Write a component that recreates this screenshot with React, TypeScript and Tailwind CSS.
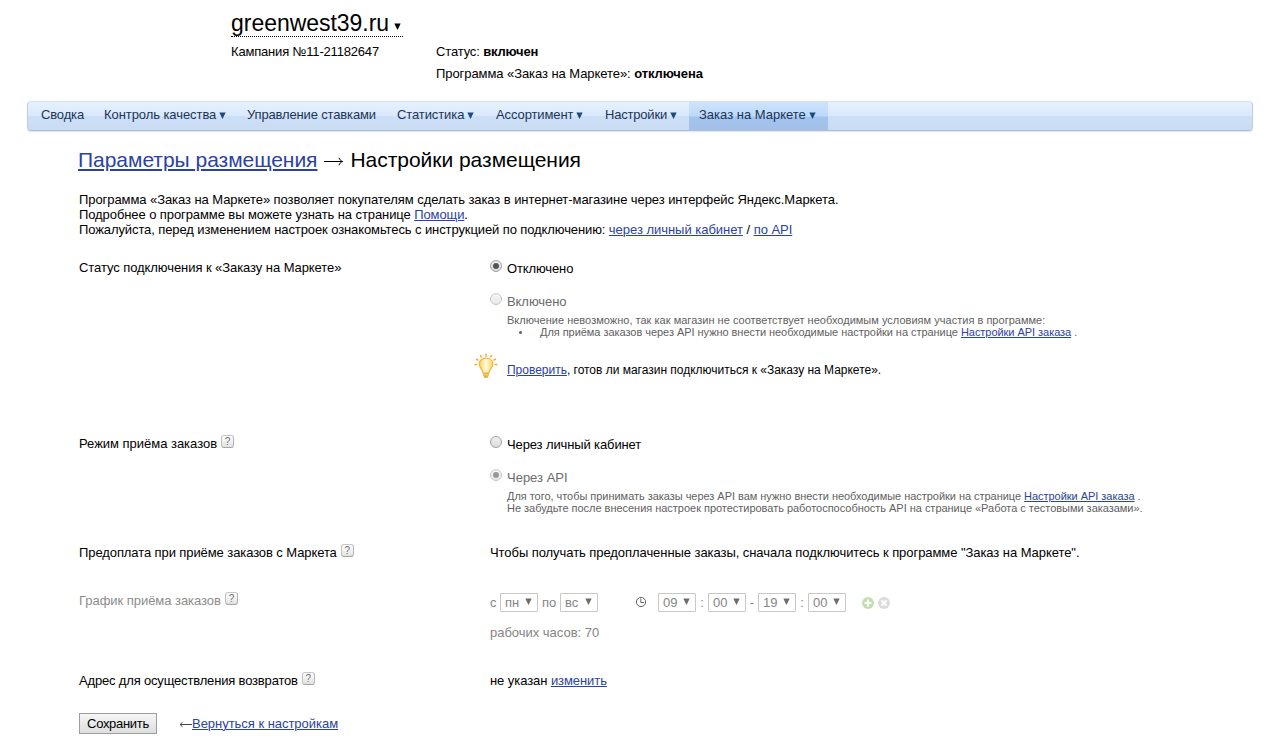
import React from 'react';

type LinkProps = { children: React.ReactNode; className?: string };

function Link({ children, className = 'underline-offset-1 decoration-1' }: LinkProps) {
  return (
    <a href="#" className={`text-[#2a42a4] underline ${className}`}>
      {children}
    </a>
  );
}

function Caret({ className = 'text-[#1d4b7e]' }: { className?: string }) {
  return (
    <svg width="7" height="7" viewBox="0 0 7 7" className={`shrink-0 ${className}`} fill="currentColor">
      <path d="M0.3 0.5h6.4L3.5 7z" />
    </svg>
  );
}

function Help() {
  return (
    <span className="-mt-px flex h-[13px] w-[13px] shrink-0 items-center justify-center rounded-[3px] border border-t-[#c6c6c6] border-r-[#b4b4b4] border-b-[#a4a4a4] border-l-[#c0c0c0] bg-linear-to-b from-white to-[#e2e2e2] text-[10px] leading-[11px] tracking-normal text-[#707070]">
      ?
    </span>
  );
}

function Radio({ checked = false, disabled = false }: { checked?: boolean; disabled?: boolean }) {
  return (
    <span
      className={`flex h-3 w-3 shrink-0 items-center justify-center rounded-full border border-[#a2a2a2] bg-linear-to-b from-[#efefef] to-[#dcdcdc] ${disabled ? 'opacity-60' : ''}`}
    >
      {checked && <span className="h-1.5 w-1.5 rounded-full bg-[#555]" />}
    </span>
  );
}

function Bulb() {
  return (
    <svg width="24" height="26" viewBox="0 0 24 26" fill="none">
      <defs>
        <linearGradient id="glass" x1="0" y1="0" x2="1" y2="0">
          <stop offset="0" stopColor="#fbcf55" />
          <stop offset=".5" stopColor="#fffbe2" />
          <stop offset="1" stopColor="#fdd45e" />
        </linearGradient>
      </defs>
      <g stroke="#f3ac35" strokeWidth="1.6">
        <path d="M12 .8v3M6.4 2.100l1.200 2.400M17.600 2.100l-1.200 2.400M2.200 6l2.400 1.400M21.800 6l-2.400 1.400M.5 11.500h2.800M20.700 11.500h2.800" />
      </g>
      <path
        d="M12 5.200c-4.200 0-6.800 2.700-6.800 6.100 0 3.600 3.600 5 4.100 9.200h5.400c.5-4.200 4.100-5.600 4.100-9.200 0-3.400-2.600-6.100-6.800-6.100z"
        fill="url(#glass)"
        stroke="#f5b53c"
        strokeWidth="1.2"
      />
      <path d="M9.200 19.500h5.600v3L13.400 25h-2.800l-1.400-2.500z" fill="#f3ae3c" />
      <path d="M9.400 21.800h5.200" stroke="#fbd98c" strokeWidth=".8" />
    </svg>
  );
}

function Select({ value }: { value: string }) {
  return (
    <span className="flex h-[19px] w-[38px] shrink-0 items-center justify-between rounded-[1px] border border-[#c8c8c8] bg-white pr-[5px] pl-1">
      <span className="leading-[15px]">{value}</span>
      <Caret className="mb-0.5 text-[#6d6d6d]" />
    </span>
  );
}

type NavItem = { label: string; width: string; menu?: boolean; active?: boolean };

const nav: NavItem[] = [
  { label: 'Сводка', width: 'w-[63px] tracking-[-0.15px]' },
  { label: 'Контроль качества', width: 'w-[143px] tracking-[-0.07px]', menu: true },
  { label: 'Управление ставками', width: 'w-[150px] tracking-[-0.15px]' },
  { label: 'Статистика', width: 'w-[99px] tracking-[-0.1px]', menu: true },
  { label: 'Ассортимент', width: 'w-[109px] tracking-[-0.1px]', menu: true },
  { label: 'Настройки', width: 'w-[94px] tracking-[-0.2px]', menu: true },
  { label: 'Заказ на Маркете', width: 'w-[139px] tracking-normal', menu: true, active: true },
];

function NavBar() {
  return (
    <nav className="mr-[18px] ml-[27px] flex h-[30px] rounded-[4px] border border-t-[#d3e0ef] border-r-[#bccde6] border-b-[#aabfdc] border-l-[#bccde6] bg-[linear-gradient(to_bottom,#e7f1fe_0%,#dae9fd_48%,#cbdff8_52%,#cbdcf1_100%)] pl-[3px] text-[#1c3555] shadow-[0_1px_1px_#dbe4f0]">
      {nav.map((item) => (
        <a
          key={item.label}
          href="#"
          className={`flex h-[28px] shrink-0 gap-[3px] pt-[5px] pl-[10px] whitespace-nowrap ${item.width} ${
            item.active ? 'bg-[linear-gradient(to_bottom,#cfe3fb_0%,#bcd9fb_50%,#a2c3ee_54%,#a4c0e7_100%)]' : ''
          }`}
        >
          <span>{item.label}</span>
          {item.menu && <Caret className="mt-[5px] text-[#1d4b7e]" />}
        </a>
      ))}
    </nav>
  );
}

function Row({ label, help, labelClass = '', className, children }: {
  label: string;
  help?: boolean;
  labelClass?: string;
  className: string;
  children: React.ReactNode;
}) {
  return (
    <div className={`flex pl-[79px] ${className}`}>
      <div className={`flex w-[411px] shrink-0 items-start gap-1 ${labelClass}`}>
        <span>{label}</span>
        {help && <Help />}
      </div>
      <div className="whitespace-nowrap">{children}</div>
    </div>
  );
}

export default function App() {
  return (
    <div className="h-[751px] w-[1271px] overflow-hidden bg-white font-['Liberation_Sans',Arial,sans-serif] text-[13px] leading-[15px] tracking-[-0.07px] text-black">
      <header className="flex h-[101px] pl-[231px] whitespace-nowrap">
        <div className="w-[205px]">
          <div className="mt-[10px] flex h-[27px] w-[172px] border-b border-dotted border-black text-[23px] leading-[26px] tracking-[-0.03px]">
            <span>greenwest39.ru</span>
            <Caret className="mt-[13px] ml-[5px] text-black" />
          </div>
          <div className="mt-[7px] tracking-[-0.18px]">Кампания №11-21182647</div>
        </div>
        <div className="pt-[44px]">
          <div className="tracking-[-0.15px]">Статус: <b>включен</b></div>
          <div className="mt-[7px]">Программа «Заказ на Маркете»: <b>отключена</b></div>
        </div>
      </header>

      <NavBar />

      <h1 className="mt-[17px] flex h-[24px] gap-[7px] pl-[78px] text-[21px] leading-[24px] tracking-[-0.03px] whitespace-nowrap">
        <Link className="decoration-2 underline-offset-2">Параметры размещения</Link>
        <svg width="20" height="24" viewBox="0 0 20 24" fill="none" stroke="currentColor" strokeWidth="1">
          <path d="M0 13.500h18.500M15 9.800c.7 2 1.800 3.200 3.700 3.700-1.900.5-3 1.700-3.700 3.700" />
        </svg>
        <span className="-ml-px">Настройки размещения</span>
      </h1>

      <div className="mt-[20px] h-[68px] pl-[79px] whitespace-nowrap">
        <p>Программа «Заказ на Маркете» позволяет покупателям сделать заказ в интернет-магазине через интерфейс Яндекс.Маркета.</p>
        <p className="tracking-[-0.09px]">Подробнее о программе вы можете узнать на странице <Link>Помощи</Link>.</p>
        <p className="tracking-[-0.1px]">
          Пожалуйста, перед изменением настроек ознакомьтесь с инструкцией по подключению:{' '}
          <span className="tracking-[-0.03px]">
            <Link>через личный кабинет</Link> / <Link>по API</Link>
          </span>
        </p>
      </div>

      <Row label="Статус подключения к «Заказу на Маркете»" className="h-[176px]">
        <div className="flex h-[34px] gap-[5px]">
          <Radio checked />
          <span className="pt-px tracking-[-0.12px]">Отключено</span>
        </div>
        <div className="flex h-[20px] gap-[5px] text-[#6b6b6b]">
          <span className="-mt-px"><Radio disabled /></span>
          <span>Включено</span>
        </div>
        <div className="h-[39px] pl-[17px] text-[11px] leading-3 text-[#5f5f5f]">
          <p className="tracking-[0.02px]">Включение невозможно, так как магазин не соответствует необходимым условиям участия в программе:</p>
          <div className="flex items-center pl-[12px] tracking-[-0.045px]">
            <span className="mr-[18px] h-[3px] w-[3px] rounded-full bg-[#5f5f5f]" />
            <span>
              Для приёма заказов через API нужно внести необходимые настройки на странице <Link>Настройки API заказа</Link> .
            </span>
          </div>
        </div>
        <div className="-ml-4 flex gap-[9px] text-[12px] leading-[14px] tracking-[-0.015px]">
          <Bulb />
          <span className="pt-[10px]"><Link>Проверить</Link>, готов ли магазин подключиться к «Заказу на Маркете».</span>
        </div>
      </Row>

      <Row label="Режим приёма заказов" help labelClass="tracking-[-0.02px]" className="h-[109px]">
        <div className="flex h-[34px] gap-[5px]">
          <Radio />
          <span className="pt-px tracking-[-0.12px]">Через личный кабинет</span>
        </div>
        <div className="flex h-[20px] gap-[5px] text-[#6b6b6b]">
          <span className="-mt-px"><Radio checked disabled /></span>
          <span className="tracking-normal">Через API</span>
        </div>
        <div className="pl-[17px] text-[11px] leading-3 text-[#5f5f5f]">
          <p className="tracking-[-0.037px]">
            Для того, чтобы принимать заказы через API вам нужно внести необходимые настройки на странице{' '}
            <Link>Настройки API заказа</Link> .
          </p>
          <p className="tracking-[-0.025px]">Не забудьте после внесения настроек протестировать работоспособность API на странице «Работа с тестовыми заказами».</p>
        </div>
      </Row>

      <Row label="Предоплата при приёме заказов с Маркета" help labelClass="tracking-[-0.09px]" className="h-[48px]">
        <span className="tracking-[-0.062px]">
          Чтобы получать предоплаченные заказы, сначала подключитесь к программе "Заказ на Маркете".
        </span>
      </Row>

      <Row label="График приёма заказов" help labelClass="tracking-[-0.04px] text-[#8c8c8c]" className="h-[80px]">
        <div className="flex h-[19px] items-center text-[#858585]">
          <span className="w-[10px]">с</span>
          <Select value="пн" />
          <span className="w-[22px] text-center">по</span>
          <Select value="вс" />
          <svg width="12" height="12" viewBox="0 0 12 12" className="mr-[11px] mb-px ml-[37px]" fill="none" stroke="#666">
            <circle cx="6" cy="6" r="4.6" />
            <path d="M5.800 2.500V6.500H9" />
          </svg>
          <Select value="09" />
          <span className="w-3 text-center">:</span>
          <Select value="00" />
          <span className="w-3 text-center">-</span>
          <Select value="19" />
          <span className="w-3 text-center">:</span>
          <Select value="00" />
          <svg width="12" height="12" viewBox="0 0 12 12" className="ml-4" fill="none">
            <circle cx="6" cy="6" r="6" fill="#c5deb0" />
            <path d="M6 2.500v7M2.500 6h7" stroke="white" strokeWidth="2" />
          </svg>
          <svg width="12" height="12" viewBox="0 0 12 12" className="ml-1" fill="none">
            <circle cx="6" cy="6" r="6" fill="#dcdcdc" />
            <path d="M3.500 3.500l5 5M8.500 3.500l-5 5" stroke="white" strokeWidth="2" />
          </svg>
        </div>
        <div className="mt-[13px] tracking-[-0.02px] text-[#858585]">рабочих часов: 70</div>
      </Row>

      <Row label="Адрес для осуществления возвратов" help labelClass="tracking-[-0.17px]" className="h-[40px]">
        не указан <Link>изменить</Link>
      </Row>

      <div className="flex items-start pl-[79px] whitespace-nowrap">
        <button className="h-[21px] w-[78px] border border-[#9d9d9d] bg-linear-to-b from-[#f6f6f6] to-[#dedede] leading-[19px] tracking-[-0.3px]">
          Сохранить
        </button>
        <span className="mt-[3px] ml-[22px] flex tracking-[-0.03px]">
          <svg width="13" height="15" viewBox="0 0 13 15" fill="none" stroke="#333" strokeWidth=".9">
            <path d="M13 8.500H1.500M3.500 6.300L1 8.500 3.500 10.700" />
          </svg>
          <Link>Вернуться к настройкам</Link>
        </span>
      </div>
    </div>
  );
}
